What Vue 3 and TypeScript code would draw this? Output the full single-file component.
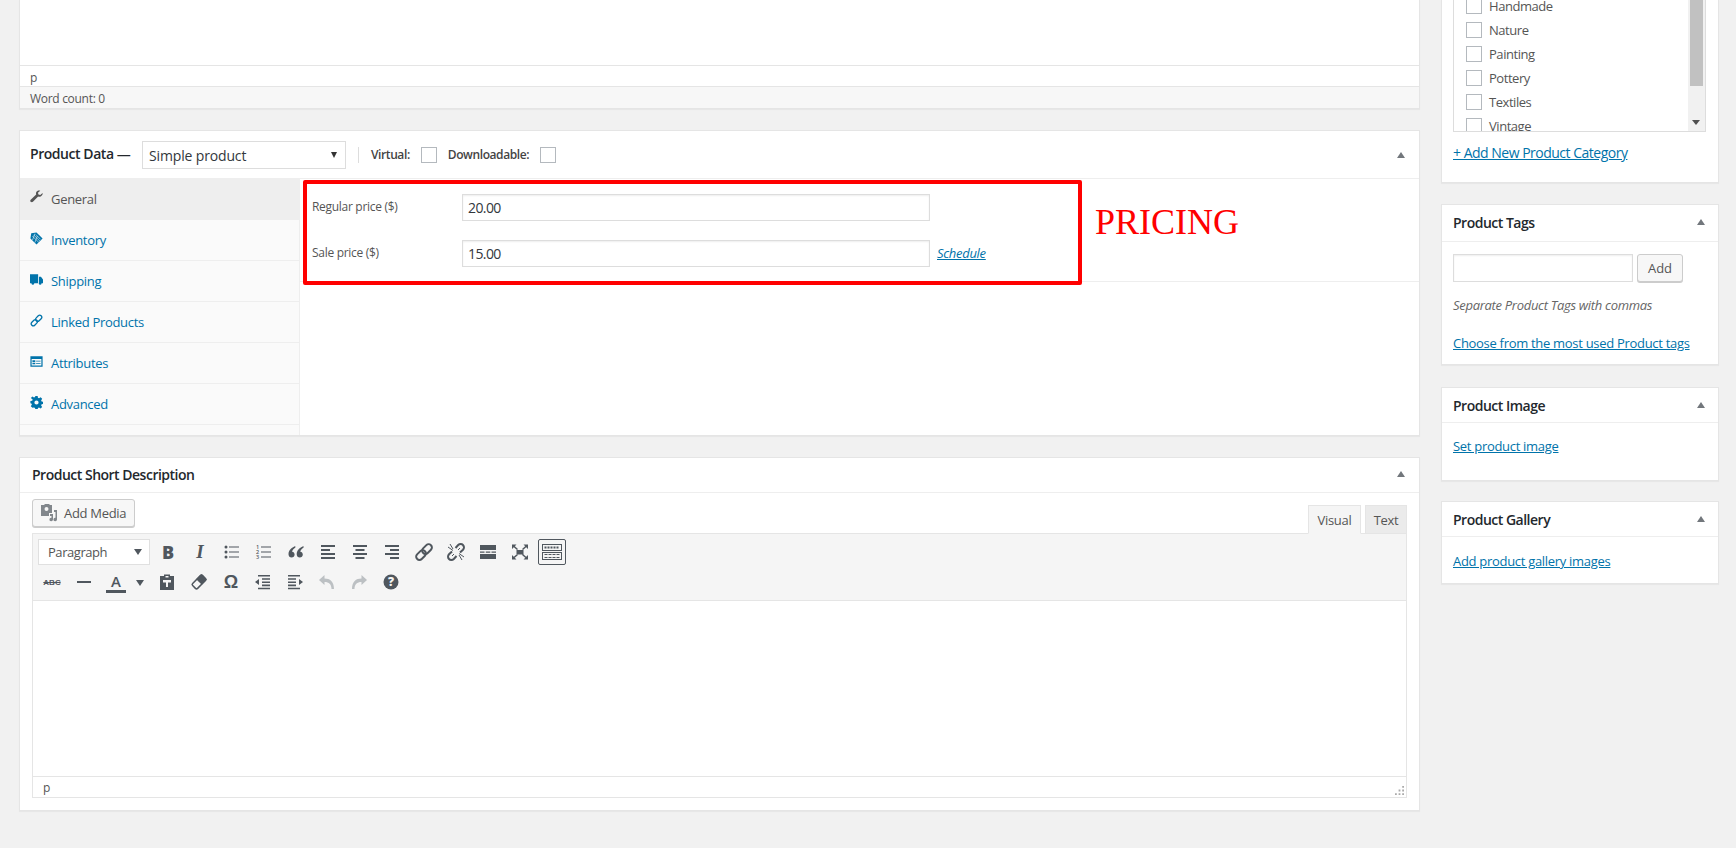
<script setup lang="ts">
interface TabItem {
  label: string;
  icon: string;
}

const tabs: TabItem[] = [
  { label: "General", icon: "wrench" },
  { label: "Inventory", icon: "tag" },
  { label: "Shipping", icon: "truck" },
  { label: "Linked Products", icon: "link" },
  { label: "Attributes", icon: "card" },
  { label: "Advanced", icon: "gear" },
];

const categories = ["Handmade", "Nature", "Painting", "Pottery", "Textiles", "Vintage"];

const rowOne = ["bold", "italic", "ul", "ol", "quote", "left", "center", "right", "tlink", "unlink", "more", "full", "sink"];
const rowTwo = ["strike", "hr", "color", "caret", "paste", "eraser", "omega", "outdent", "indent", "undo", "redo", "help"];
</script>

<template>
  <div class="page">
    <div class="main">
      <section class="box top-editor">
        <div class="top-canvas"></div>
        <div class="path-row">p</div>
        <div class="count-row">Word count: 0</div>
      </section>

      <section class="box product">
        <header class="product-head">
          <span class="product-title">Product Data —</span>
          <div class="fake-select">Simple product<i class="select-arrow"></i></div>
          <span class="divider"></span>
          <span class="check-label">Virtual:</span>
          <span class="check"></span>
          <span class="check-label second">Downloadable:</span>
          <span class="check"></span>
          <i class="collapse push"></i>
        </header>
        <div class="product-body">
          <ul class="tabs">
            <li v-for="(tab, i) in tabs" :key="tab.label" class="tab" :class="{ active: i === 0 }">
              <svg class="tab-icon" viewBox="0 0 16 16">
                <path v-if="tab.icon === 'wrench'" d="M15.500 3.600l-2.900 2.600-2.200-.6-.6-2.100L12.600.8C10.700.1 8.500.7 7.700 2.500c-.5 1-.4 2-.1 2.900L.9 11.900c-.8.800-.8 2 0 2.700.8.800 1.900.7 2.700 0l6.400-6.600c1.100.4 2.400.3 3.500-.4 1.500-.9 2.400-2.500 2-4z" />
                <template v-else-if="tab.icon === 'tag'">
                  <path d="M8 .5L15.500 8 8 15.500.5 8 1.500 1.500z" />
                  <path d="M4.500 3.500l8 8M7 3l6 6M3 5l8 8M6 2L3 10M9 5L6 13" stroke="#fafafa" stroke-width=".7" fill="none" />
                </template>
                <template v-else-if="tab.icon === 'truck'">
                  <path d="M0 1.500h10v11H0zM11 4.500h2.500L16 8v4.500h-5z" />
                  <circle cx="3.500" cy="13" r="1.600" />
                  <circle cx="12.500" cy="13" r="1.600" />
                </template>
                <g v-else-if="tab.icon === 'link'" fill="none" stroke-width="1.600">
                  <rect x="8.200" y="1" width="5" height="8.500" rx="2.500" transform="rotate(45 10.700 5.250)" />
                  <rect x="2.800" y="6.500" width="5" height="8.500" rx="2.500" transform="rotate(45 5.300 10.750)" />
                </g>
                <template v-else-if="tab.icon === 'card'">
                  <path fill-rule="evenodd" d="M.5 1.500h15v13H.5zM2 5v8h12V5z" />
                  <path d="M3 6.500h3.500v2H3zM3 9.500h3.500v2H3zM7.500 7h5.500v1H7.500zM7.500 10h5.500v1H7.500z" />
                </template>
                <template v-else>
                  <path fill-rule="evenodd" d="M6.600 0h2.800l.4 2.200 1.300.6L13 1.500l2 2-1.300 1.900.6 1.300 2.200.4v2.800l-2.200.4-.6 1.300 1.300 1.900-2 2-1.900-1.300-1.300.6-.4 2.200H6.600l-.4-2.200-1.300-.6L3 14.500l-2-2 1.300-1.900-.6-1.300L.5 8.900V6.100l2.200-.4.6-1.300L1 2.500l2-2 1.900 1.300 1.300-.6zM8 5.400a2.600 2.600 0 100 5.200 2.600 2.600 0 000-5.200z" />
                </template>
              </svg>
              <span>{{ tab.label }}</span>
            </li>
            <li class="tab-tail"></li>
          </ul>
          <div class="panel">
            <div class="fields">
              <div class="field">
                <label class="field-label">Regular price ($)</label>
                <div class="field-input">20.00</div>
              </div>
              <div class="field">
                <label class="field-label">Sale price ($)</label>
                <div class="field-input">15.00</div>
                <a class="schedule">Schedule</a>
              </div>
            </div>
            <div class="red-mark"></div>
            <div class="red-title">PRICING</div>
          </div>
        </div>
      </section>

      <section class="box short">
        <header class="box-head short-head">
          <h2>Product Short Description</h2>
          <i class="collapse"></i>
        </header>
        <div class="short-body">
          <div class="media-row">
            <button class="media-btn">
              <svg viewBox="0 0 18 18" class="media-icon">
                <path fill-rule="evenodd" d="M1 1h3l1-1h4l1 1h2v8H9v3H1zM6.500 3a2 2 0 100 4 2 2 0 000-4z" />
                <path d="M14 6h3v9.500a1.800 1.800 0 11-1.500-1.800V8H14zM10 10h3v5.500a1.800 1.800 0 11-1.500-1.800V12H10z" />
              </svg>
              Add Media
            </button>
            <div class="mode visual">Visual</div>
            <div class="mode text-mode">Text</div>
          </div>
          <div class="editor">
            <div class="toolbar">
              <div class="tool-row first">
                <div class="para-select">Paragraph<i class="para-arrow"></i></div>
                <span v-for="name in rowOne" :key="name" class="tool" :class="name">
                  <b v-if="name === 'bold'">B</b>
                  <em v-else-if="name === 'italic'">I</em>
                  <svg v-else viewBox="0 0 20 20" class="tool-svg">
                    <template v-if="name === 'ul'">
                      <circle cx="4" cy="5" r="1.500" /><circle cx="4" cy="10" r="1.500" /><circle cx="4" cy="15" r="1.500" />
                      <path d="M7 4.500h10v1H7zM7 9.500h10v1H7zM7 14.500h10v1H7z" />
                    </template>
                    <template v-else-if="name === 'ol'">
                      <text x="2" y="7" class="mini">1</text><text x="2" y="12" class="mini">2</text><text x="2" y="17" class="mini">3</text>
                      <path d="M7 4.500h10v1H7zM7 9.500h10v1H7zM7 14.500h10v1H7z" />
                    </template>
                    <path v-else-if="name === 'quote'" d="M9.300 4C5.500 5.500 2.500 8.500 2.500 12.200c0 2 1.300 3.300 3.100 3.300 1.700 0 3-1.300 3-3 0-1.600-1.100-2.700-2.500-2.800.3-1.600 1.500-2.900 3.200-3.900zM17.500 4c-3.800 1.500-6.800 4.500-6.800 8.200 0 2 1.300 3.300 3.100 3.300 1.700 0 3-1.300 3-3 0-1.600-1.100-2.700-2.500-2.800.3-1.600 1.500-2.900 3.200-3.900z" />
                    <path v-else-if="name === 'left'" d="M3 3h14v2H3zM3 7h9v2H3zM3 11h14v2H3zM3 15h14v2H3z" />
                    <path v-else-if="name === 'center'" d="M3 3h14v2H3zM5.500 7h9v2h-9zM3 11h14v2H3zM5.500 15h9v2h-9z" />
                    <path v-else-if="name === 'right'" d="M3 3h14v2H3zM8 7h9v2H8zM3 11h14v2H3zM8 15h9v2H8z" />
                    <g v-else-if="name === 'tlink'" fill="none" stroke="#50575e" stroke-width="2">
                      <rect x="9.800" y="1.500" width="6.500" height="11" rx="3.200" transform="rotate(45 13 7)" />
                      <rect x="3.800" y="7.500" width="6.500" height="11" rx="3.200" transform="rotate(45 7 13)" />
                    </g>
                    <g v-else-if="name === 'unlink'" fill="none" stroke="#50575e" stroke-width="2">
                      <path d="M9.500 6l2.700-3c1.400-1.400 3.600-1.400 4.800 0 1.300 1.300 1.300 3.400 0 4.700L14 10.500" />
                      <path d="M10.500 14l-2.700 3c-1.400 1.400-3.600 1.400-4.800 0-1.300-1.300-1.300-3.400 0-4.700L6 9.500" />
                      <path d="M4 2l3 5M2 5l5 3.500M16 18l-3-5M18 15l-5-3.500M8 12l-2 2M12 8l2-2" stroke-width="1" />
                    </g>
                    <path v-else-if="name === 'more'" d="M2 3h16v5H2zM2 9.500h4.500v1.200H2zM7.800 9.500h4.500v1.200H7.800zM13.500 9.500H18v1.200h-4.500zM2 12h16v5H2z" />
                    <path v-else-if="name === 'full'" d="M6.500 8h7v4.500h-7zM2 2.500h4.500L2 7zM4 3.500l4 3.500-1 1-4-3.500zM18 2.500h-4.500L18 7zM16 3.500L12 7l1 1 4-3.500zM2 17.500h4.500L2 13zM4 16.500l4-3.500-1-1-4 3.500zM18 17.500h-4.500L18 13zM16 16.500L12 13l1-1 4 3.500z" />
                    <g v-else-if="name === 'sink'" fill="none" stroke="#50575e">
                      <rect x="0.500" y="2.500" width="19" height="6" />
                      <rect x="0.500" y="10.500" width="19" height="7" />
                      <path d="M2.500 5.500h15" stroke-width="2" stroke-dasharray="2 1" />
                      <path d="M2.500 12.500h15M2.500 15.500h15" stroke-dasharray="3 1" />
                    </g>
                  </svg>
                </span>
              </div>
              <div class="tool-row second-row">
                <span v-for="name in rowTwo" :key="name" class="tool" :class="name">
                  <span v-if="name === 'strike'" class="strike-glyph">ABC</span>
                  <span v-else-if="name === 'color'" class="color-glyph">A</span>
                  <i v-else-if="name === 'caret'" class="para-arrow caret-arrow"></i>
                  <span v-else-if="name === 'omega'" class="omega-glyph">Ω</span>
                  <svg v-else viewBox="0 0 20 20" class="tool-svg" :class="{ faded: name === 'undo' || name === 'redo' }">
                    <path v-if="name === 'hr'" d="M3 9h14v2H3z" />
                    <template v-else-if="name === 'paste'">
                      <path fill-rule="evenodd" d="M7 2.500h6V4h4v14H3V4h4zM8.500 4v1.500h3V4zM6 8v2.500h3V15h2v-4.500h3V8z" />
                    </template>
                    <g v-else-if="name === 'eraser'" transform="rotate(-45 10 10)">
                      <rect x="3" y="6.500" width="14" height="7" rx="1.500" fill="none" stroke="#50575e" stroke-width="1.500" />
                      <path d="M10 6h6.500a1 1 0 011 1v6a1 1 0 01-1 1H10z" />
                    </g>
                    <path v-else-if="name === 'outdent'" d="M5 3h12v1.600H5zM9 6.200h8v1.600H9zM9 9.400h8V11H9zM9 12.600h8v1.600H9zM5 15.800h12v1.400H5zM2 10l4-3v6z" />
                    <path v-else-if="name === 'indent'" d="M3 3h12v1.600H3zM3 6.200h8v1.600H3zM3 9.400h8V11H3zM3 12.600h8v1.600H3zM3 15.800h12v1.400H3zM18 10l-4-3v6z" />
                    <path v-else-if="name === 'undo'" d="M2 8l5.500-5v3.400c5.500 0 9.500 3 9.500 10.600h-2.500c0-4.600-2.500-7-7-7V13z" />
                    <path v-else-if="name === 'redo'" d="M18 8l-5.500-5v3.400C7 6.400 3 9.400 3 17h2.500c0-4.600 2.500-7 7-7V13z" />
                    <template v-else-if="name === 'help'">
                      <circle cx="10" cy="10" r="7.500" />
                      <text x="10" y="14.300" class="help-mark">?</text>
                    </template>
                  </svg>
                </span>
              </div>
            </div>
            <div class="canvas"></div>
            <div class="editor-path">
              p
              <svg class="grip" viewBox="0 0 10 10">
                <path d="M8 0h2v2H8zM4 4h2v2H4zM8 4h2v2H8zM0 8h2v2H0zM4 8h2v2H4zM8 8h2v2H8z" />
              </svg>
            </div>
          </div>
        </div>
      </section>
    </div>

    <aside class="side">
      <section class="box cats">
        <div class="cat-list">
          <ul class="cat-items">
            <li v-for="cat in categories" :key="cat" class="cat">
              <span class="check"></span>{{ cat }}
            </li>
          </ul>
          <div class="scroll">
            <div class="thumb"></div>
            <i class="scroll-arrow"></i>
          </div>
        </div>
        <a class="link add-cat">+ Add New Product Category</a>
      </section>

      <section class="box tags">
        <header class="box-head">
          <h2>Product Tags</h2>
          <i class="collapse"></i>
        </header>
        <div class="tags-body">
          <div class="tag-row">
            <div class="tag-input"></div>
            <button class="add-btn">Add</button>
          </div>
          <p class="hint">Separate Product Tags with commas</p>
          <a class="link">Choose from the most used Product tags</a>
        </div>
      </section>

      <section class="box image">
        <header class="box-head">
          <h2>Product Image</h2>
          <i class="collapse"></i>
        </header>
        <div class="link-body"><a class="link">Set product image</a></div>
      </section>

      <section class="box gallery">
        <header class="box-head">
          <h2>Product Gallery</h2>
          <i class="collapse"></i>
        </header>
        <div class="link-body"><a class="link">Add product gallery images</a></div>
      </section>
    </aside>
  </div>
</template>

<style>
html,
body {
  margin: 0;
  background: #f1f1f1;
}
</style>

<style scoped>
* {
  box-sizing: border-box;
}
.page {
  display: flex;
  gap: 21px;
  height: 848px;
  padding-left: 19px;
  overflow: hidden;
  background: #f1f1f1;
  font-family: "Open Sans", sans-serif;
  font-size: 13px;
  letter-spacing: -0.3px;
  color: #444;
}
.main {
  width: 1401px;
}
.side {
  width: 278px;
}
.box {
  background: #fff;
  border: 1px solid #e5e5e5;
  box-shadow: 0 1px 1px rgba(0, 0, 0, 0.04);
}
h2 {
  margin: 0;
  font-size: 14px;
  font-weight: 600;
  letter-spacing: -0.5px;
  color: #23282d;
}
ul {
  list-style: none;
  margin: 0;
  padding: 0;
}
.link {
  color: #0073aa;
  text-decoration: underline;
}
.collapse {
  width: 0;
  height: 0;
  border-left: 4.500px solid transparent;
  border-right: 4.500px solid transparent;
  border-bottom: 6px solid #72777c;
}
.check {
  flex: none;
  width: 16px;
  height: 16px;
  border: 1px solid #b4b9be;
  background: #fff;
}

/* top editor, scrolled off */
.top-editor {
  height: 109px;
  border-top: 0;
  margin-bottom: 21px;
  display: flex;
  flex-direction: column;
}
.top-canvas {
  height: 66px;
  flex: none;
  border-bottom: 1px solid #e5e5e5;
}
.path-row {
  height: 20px;
  flex: none;
  padding-left: 10px;
  font-size: 12px;
  line-height: 24px;
  overflow: hidden;
  color: #555;
}
.count-row {
  flex: 1;
  min-height: 0;
  overflow: hidden;
  padding-left: 10px;
  border-top: 1px solid #e5e5e5;
  background: #f7f7f7;
  font-size: 12px;
  line-height: 24px;
  color: #555;
}

/* product data */
.product {
  height: 306px;
  margin-bottom: 21px;
  display: flex;
  flex-direction: column;
}
.product-head {
  height: 47px;
  flex: none;
  display: flex;
  align-items: center;
  padding: 0 14px 0 10px;
}
.product-title {
  font-size: 14px;
  font-weight: 600;
  letter-spacing: -0.45px;
  color: #23282d;
  width: 112px;
  white-space: nowrap;
  margin-top: -2px;
}
.fake-select {
  position: relative;
  width: 204px;
  height: 28px;
  border: 1px solid #ddd;
  padding-left: 6px;
  font-size: 14px;
  letter-spacing: -0.15px;
  line-height: 28px;
  color: #32373c;
}
.select-arrow {
  position: absolute;
  right: 8px;
  top: 10px;
  border-left: 3.500px solid transparent;
  border-right: 3.500px solid transparent;
  border-top: 6px solid #333;
}
.divider {
  width: 1px;
  height: 16px;
  margin: 0 12px;
  background: #ddd;
}
.check-label {
  font-size: 12px;
  font-weight: 600;
  letter-spacing: -0.4px;
  color: #444;
  margin-right: 11px;
}
.check-label.second {
  margin-left: 11px;
}
.push {
  margin-left: auto;
}
.product-body {
  flex: 1;
  display: flex;
  border-top: 1px solid #eee;
}
.tabs {
  width: 280px;
  flex: none;
  display: flex;
  flex-direction: column;
  border-right: 1px solid #eee;
  background: #fafafa;
}
.tab {
  height: 41px;
  flex: none;
  display: flex;
  align-items: center;
  padding-left: 10px;
  border-bottom: 1px solid #eee;
  color: #0073aa;
  fill: #0073aa;
  stroke: #0073aa;
  stroke-width: 0;
}
.tab.active {
  background: #eee;
  color: #555;
  fill: #555;
  border-bottom: 0;
  padding-bottom: 2px;
}
.tab-icon {
  width: 13px;
  height: 13px;
  margin-right: 8px;
  margin-top: -4px;
}
.tab-icon g {
  stroke-width: 1.600;
}
.tab-tail {
  flex: 1;
  background: #fafafa;
}
.panel {
  position: relative;
  flex: 1;
}
.fields {
  height: 103px;
  padding: 15px 0 0 12px;
  border-bottom: 1px solid #eee;
}
.field {
  display: flex;
  align-items: center;
  height: 27px;
  margin-bottom: 19px;
}
.field-label {
  width: 150px;
  font-size: 12px;
  margin-top: -2px;
  color: #555;
}
.field-input {
  width: 468px;
  height: 27px;
  border: 1px solid #ddd;
  box-shadow: inset 0 1px 2px rgba(0, 0, 0, 0.07);
  padding-left: 5px;
  font-size: 14px;
  letter-spacing: -0.6px;
  line-height: 26px;
  color: #32373c;
}
.schedule {
  margin-left: 7px;
  font-size: 13px;
  font-style: italic;
  color: #0073aa;
  text-decoration: underline;
  margin-top: -2px;
}
/* annotation drawn over the screenshot */
.red-mark {
  position: absolute;
  left: 3px;
  top: 1px;
  width: 779px;
  height: 105px;
  border: 4px solid #f00;
  border-radius: 2px;
}
.red-title {
  position: absolute;
  left: 795px;
  top: 23px;
  font-family: "Liberation Serif", serif;
  font-size: 36px;
  letter-spacing: 0;
  line-height: 41px;
  color: #f00;
}

/* short description */
.short {
  height: 354px;
}
.box-head {
  display: flex;
  align-items: center;
  justify-content: space-between;
  height: 35px;
  padding: 0 13px 2px 11px;
  border-bottom: 1px solid #eee;
}
.short-head {
  padding: 0 14px 2px 12px;
}
.short-body {
  padding: 6px 12px 0 12px;
}
.media-row {
  display: flex;
  align-items: flex-start;
  height: 34px;
}
.media-btn {
  display: flex;
  align-items: center;
  width: 103px;
  height: 28px;
  padding: 0 0 1px 7px;
  background: #f7f7f7;
  border: 1px solid #ccc;
  border-radius: 3px;
  box-shadow: 0 1px 0 #ccc;
  font-family: inherit;
  font-size: 13px;
  letter-spacing: -0.3px;
  color: #555;
}
.media-icon {
  width: 18px;
  height: 18px;
  margin-right: 6px;
  fill: #82878c;
}
.mode {
  height: 29px;
  margin-top: 6px;
  border: 1px solid #e5e5e5;
  font-size: 13px;
  line-height: 29px;
  text-align: center;
  color: #555;
  position: relative;
  z-index: 1;
}
.visual {
  width: 53px;
  margin-left: auto;
  background: #f5f5f5;
  border-bottom-color: #f5f5f5;
}
.text-mode {
  width: 42px;
  margin-left: 4px;
  background: #ebebeb;
}
.editor {
  height: 265px;
  border: 1px solid #e5e5e5;
  display: flex;
  flex-direction: column;
}
.toolbar {
  height: 67px;
  flex: none;
  padding: 5px 0 0 5px;
  background: #f5f5f5;
  border-bottom: 1px solid #e5e5e5;
}
.tool-row {
  display: flex;
  align-items: center;
}
.first {
  height: 26px;
}
.second-row {
  height: 30px;
  margin: 2px 0 0 -2px;
}
.para-select {
  position: relative;
  width: 112px;
  height: 26px;
  margin-right: 2px;
  padding-left: 9px;
  background: #fff;
  border: 1px solid #e0e0e0;
  font-size: 13px;
  letter-spacing: -0.45px;
  line-height: 24px;
  color: #555;
}
.para-arrow {
  position: absolute;
  right: 7px;
  top: 9px;
  border-left: 4px solid transparent;
  border-right: 4px solid transparent;
  border-top: 6px solid #50575e;
}
.tool {
  width: 32px;
  height: 26px;
  flex: none;
  display: flex;
  align-items: center;
  justify-content: center;
  fill: #50575e;
  color: #50575e;
  letter-spacing: 0;
}
.tool b {
  font-family: "Open Sans", sans-serif;
  font-size: 18px;
  font-weight: 800;
}
.tool em {
  font-family: "Liberation Serif", serif;
  font-size: 19px;
  font-weight: 700;
}
.tool-svg {
  width: 20px;
  height: 20px;
}
.tool-svg.faded {
  fill: #bcc0c3;
}
.mini {
  font-family: "Open Sans", sans-serif;
  font-size: 5.500px;
  font-weight: 600;
}
.help-mark {
  font-family: "Open Sans", sans-serif;
  font-size: 12px;
  font-weight: 800;
  fill: #f5f5f5;
  text-anchor: middle;
}
.sink {
  width: 28px;
  margin-left: 2px;
  border: 1px solid #50575e;
  border-radius: 2px;
  background: #f5f5f5;
}
.strike-glyph {
  font-family: "Liberation Sans", sans-serif;
  font-size: 8px;
  font-weight: 700;
  text-decoration: line-through;
  color: #50575e;
}
.color-glyph {
  font-size: 15px;
  font-weight: 600;
  line-height: 18px;
  padding: 0 3px;
  width: 20px;
  text-align: center;
  border-bottom: 3px solid #50575e;
}
.caret {
  width: 15px;
  position: relative;
  margin-right: 4px;
}
.caret-arrow {
  right: 3px;
  top: 11px;
}
.omega-glyph {
  font-family: "Liberation Sans", sans-serif;
  font-size: 18px;
  font-weight: 700;
}
.canvas {
  flex: 1;
  background: #fff;
}
.editor-path {
  position: relative;
  height: 21px;
  flex: none;
  padding-left: 10px;
  border-top: 1px solid #e5e5e5;
  font-size: 12px;
  line-height: 22px;
  color: #555;
}
.grip {
  position: absolute;
  right: 2px;
  bottom: 2px;
  width: 9px;
  height: 9px;
  fill: #aaa;
}

/* sidebar */
.cats {
  height: 183px;
  border-top: 0;
  margin-bottom: 21px;
  padding: 0 12px 0 11px;
}
.cat-list {
  display: flex;
  height: 132px;
  border: 1px solid #ddd;
  border-top: 0;
  overflow: hidden;
}
.cat-items {
  flex: 1;
  margin-top: -6px;
  padding-left: 12px;
}
.cat {
  display: flex;
  align-items: center;
  gap: 7px;
  height: 24px;
  flex: none;
  letter-spacing: -0.45px;
  color: #555;
}
.scroll {
  position: relative;
  width: 17px;
  background: #f1f1f1;
}
.thumb {
  height: 86px;
  margin: 0 2px;
  background: #c1c1c1;
}
.scroll-arrow {
  position: absolute;
  left: 4px;
  bottom: 6px;
  border-left: 4px solid transparent;
  border-right: 4px solid transparent;
  border-top: 5px solid #505050;
}
.add-cat {
  display: block;
  margin-top: 11px;
  font-size: 14px;
  letter-spacing: -0.5px;
}
.tags {
  height: 161px;
  margin-bottom: 22px;
}
.tags .box-head {
  height: 37px;
}
.tags-body {
  padding: 12px 11px 0;
}
.tag-row {
  display: flex;
  gap: 4px;
}
.tag-input {
  width: 180px;
  height: 28px;
  border: 1px solid #ddd;
  box-shadow: inset 0 1px 2px rgba(0, 0, 0, 0.07);
}
.add-btn {
  width: 46px;
  height: 28px;
  background: #f7f7f7;
  border: 1px solid #ccc;
  border-radius: 3px;
  box-shadow: 0 1px 0 #ccc;
  font-family: inherit;
  font-size: 13px;
  color: #555;
}
.hint {
  margin: 14px 0 20px;
  font-style: italic;
  color: #666;
  line-height: 18px;
}
.image {
  height: 94px;
  margin-bottom: 20px;
}
.gallery {
  height: 83px;
}
.image .box-head,
.gallery .box-head {
  padding-bottom: 0;
}
.link-body {
  padding: 14px 11px 0;
}
.gallery .link-body {
  padding-top: 15px;
}
</style>
